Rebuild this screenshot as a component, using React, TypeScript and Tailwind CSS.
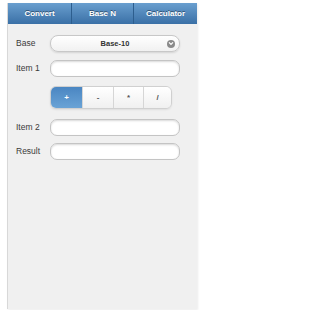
import React from "react";

const font = { fontFamily: '"Liberation Sans", Arial, sans-serif' };

function Field({ label, top }: { label: string; top: string }) {
  return (
    <div className={`flex items-center ${top}`}>
      <div className="w-[34px] text-[8.5px] text-[#3a3a3a]">{label}</div>
      <div className="h-[17px] w-[130px] rounded-[7px] border border-[#c4c4c4] bg-white shadow-[inset_0_1px_2px_rgba(0,0,0,0.15)]" />
    </div>
  );
}

export default function App() {
  return (
    <div className="h-[310px] w-[207px] bg-white" style={font}>
      <div className="ml-[7px] mt-[3px] flex h-[306px] w-[190px] flex-col border-l border-[#d8d8d8] bg-[#f0f0f0] shadow-[1px_1px_2px_rgba(0,0,0,0.08)]">
        <div className="flex h-[21px] bg-gradient-to-b from-[#6a9fcf] to-[#3a70a6] text-[8px] font-bold text-white [text-shadow:0_-1px_0_rgba(0,0,0,0.45)]">
          <div className="flex w-[64px] items-center justify-center border-r border-[#2d5e8e]">Convert</div>
          <div className="flex w-[62px] items-center justify-center border-r border-[#2d5e8e]">Base N</div>
          <div className="flex flex-1 items-center justify-center">Calculator</div>
        </div>
        <div className="pl-[8px]">
          <div className="mt-[11px] flex items-center">
            <div className="w-[34px] text-[8.5px] text-[#3a3a3a]">Base</div>
            <div className="relative flex h-[17px] w-[130px] items-center justify-center rounded-[8px] border border-[#c8c8c8] bg-gradient-to-b from-white to-[#f1f1f1] text-[7.5px] font-bold text-[#333] shadow-[0_1px_2px_rgba(0,0,0,0.12)]">
              Base-10
              <div className="absolute right-[4px] top-[3.5px] flex h-[8px] w-[8px] items-center justify-center rounded-full bg-[#8a8a8a]">
                <svg width="6" height="5" viewBox="0 0 6 5">
                  <path d="M1 1.4 L3 3.4 L5 1.4" stroke="white" strokeWidth="1.3" fill="none" />
                </svg>
              </div>
            </div>
          </div>
          <Field label="Item 1" top="mt-[8px]" />
          <div className="ml-[34px] mt-[9px] flex h-[23px] w-[122px] overflow-hidden rounded-[6px] border border-[#d0d0d0] text-[8px] font-bold shadow-[0_1px_2px_rgba(0,0,0,0.08)]">
            <div className="flex w-[31px] items-center justify-center bg-gradient-to-b from-[#4a86c2] to-[#6aa3d6] text-white">+</div>
            <div className="flex w-[31px] items-center justify-center border-l border-[#d6d6d6] bg-gradient-to-b from-white to-[#f0f0f0] text-[#555]">-</div>
            <div className="flex w-[30px] items-center justify-center border-l border-[#d6d6d6] bg-gradient-to-b from-white to-[#f0f0f0] text-[#555]">*</div>
            <div className="flex flex-1 items-center justify-center border-l border-[#d6d6d6] bg-gradient-to-b from-white to-[#f0f0f0] text-[#555]">/</div>
          </div>
          <Field label="Item 2" top="mt-[10px]" />
          <Field label="Result" top="mt-[7px]" />
        </div>
      </div>
    </div>
  );
}
